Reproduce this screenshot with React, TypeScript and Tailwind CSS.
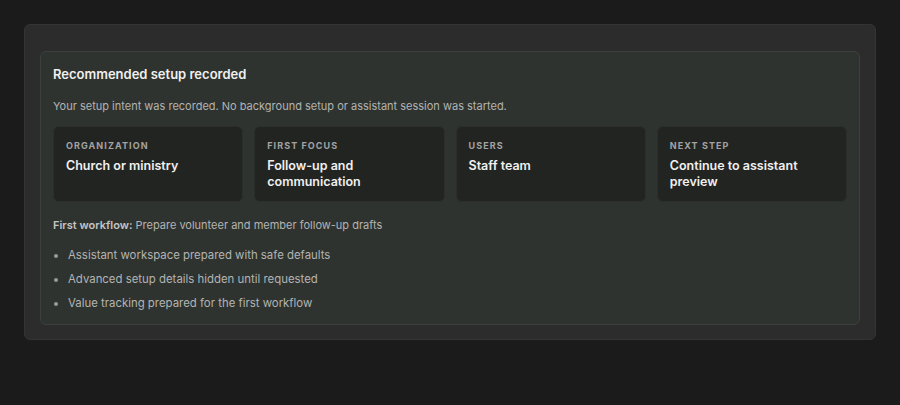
const cards = [
  { label: "ORGANIZATION", value: "Church or ministry" },
  { label: "FIRST FOCUS", value: "Follow-up and communication" },
  { label: "USERS", value: "Staff team" },
  { label: "NEXT STEP", value: "Continue to assistant preview" },
];

const notes = [
  "Assistant workspace prepared with safe defaults",
  "Advanced setup details hidden until requested",
  "Value tracking prepared for the first workflow",
];

export default function App() {
  return (
    <div className="min-h-[405px] bg-[#1b1b1b] px-6 pt-6 font-['Inter',sans-serif]">
      <div className="rounded-md border border-[#343434] bg-[#2c2c2c] px-[15px] pt-[26px] pb-[14px]">
        <section className="rounded-md border border-[#3b403b] bg-[#2f332f] px-3 pt-3 pb-[11px]">
          <h2 className="text-[13px] font-semibold leading-5 text-[#f0f0f0]">
            Recommended setup recorded
          </h2>
          <p className="mt-3 text-[11px] leading-5 text-[#b3b3b3]">
            Your setup intent was recorded. No background setup or assistant session was started.
          </p>
          <div className="mt-[10px] grid grid-cols-4 gap-[11px]">
            {cards.map((c) => (
              <div
                key={c.label}
                className="h-[76px] rounded-md border border-[#2b2e2b] bg-[#222422] px-3 pt-[13px]"
              >
                <p className="text-[9px] font-bold leading-[12px] tracking-[0.12em] text-[#a3a3a3]">
                  {c.label}
                </p>
                <p className="mt-[6px] text-[12.5px] font-semibold leading-4 text-[#f0f0f0]">
                  {c.value}
                </p>
              </div>
            ))}
          </div>
          <p className="mt-[13px] text-[11px] leading-5 text-[#b3b3b3]">
            <span className="font-semibold text-[#c4c4c4]">First workflow:</span> Prepare volunteer and
            member follow-up drafts
          </p>
          <ul className="mt-[10px] flex flex-col gap-1 pl-[15px] text-[11.4px] leading-5 text-[#b3b3b3]">
            {notes.map((n) => (
              <li key={n} className="list-disc marker:text-[#9a9a9a]">
                {n}
              </li>
            ))}
          </ul>
        </section>
      </div>
    </div>
  );
}
